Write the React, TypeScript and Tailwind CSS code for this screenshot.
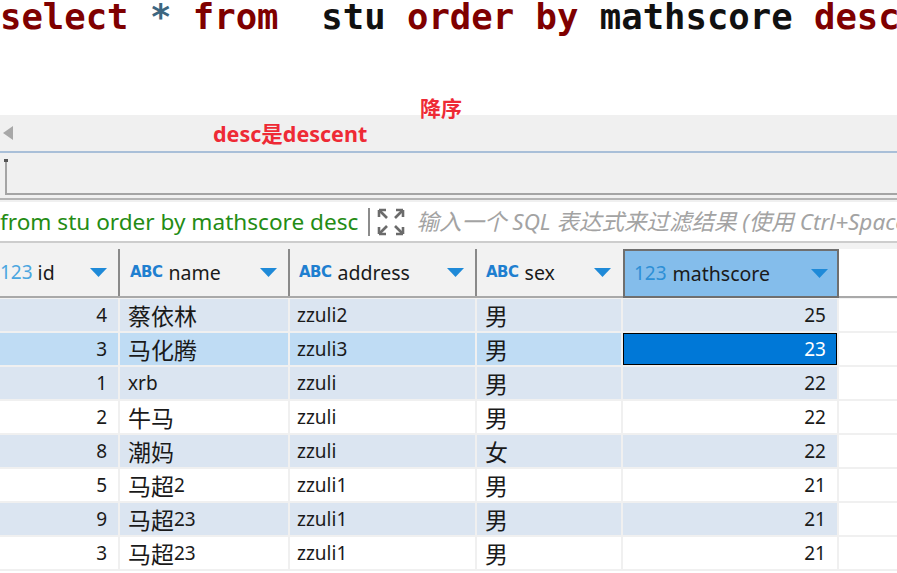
import React from "react";

const FONT = { fontFamily: '"Noto Sans", "Noto Sans CJK SC", sans-serif' };
const CJK = { fontFamily: '"Noto Sans CJK SC", sans-serif' };

function Mixed({ text }: { text: string }) {
  const parts = text.split(/([\u4e00-\u9fff]+)/).filter((p) => p.length > 0);
  return (
    <>
      {parts.map((p, i) =>
        /[\u4e00-\u9fff]/.test(p) ? (
          <span key={i} className="text-[23px] leading-none" style={CJK}>
            {p}
          </span>
        ) : (
          <span key={i}>{p}</span>
        )
      )}
    </>
  );
}

function Tri() {
  return (
    <svg width="17" height="9" viewBox="0 0 17 9">
      <polygon points="0,0 17,0 8.5,9" fill="#1f8ad8" />
    </svg>
  );
}

function Abc() {
  return (
    <span className="text-[15px] font-bold text-[#1f7fd0] tracking-[-0.5px] mr-[6px]" style={{ fontFamily: '"DejaVu Sans", sans-serif' }}>
      ABC
    </span>
  );
}

function Num() {
  return <span className="text-[19px] text-[#4aa6e0] mr-[5px]">123</span>;
}

function ExpandIcon() {
  return (
    <svg width="28" height="28" viewBox="0 0 28 28" fill="none" stroke="#6b6b6b" strokeWidth="2.6">
      <path d="M3 3 L10 10" />
      <path d="M2 2 L2 9 M2 2 L9 2" />
      <path d="M25 3 L18 10" />
      <path d="M26 2 L26 9 M26 2 L19 2" />
      <path d="M3 25 L10 18" />
      <path d="M2 26 L2 19 M2 26 L9 26" />
      <path d="M25 25 L18 18" />
      <path d="M26 26 L26 19 M26 26 L19 26" />
    </svg>
  );
}

const rows = [
  { id: 4, name: "蔡依林", addr: "zzuli2", sex: "男", score: 25 },
  { id: 3, name: "马化腾", addr: "zzuli3", sex: "男", score: 23 },
  { id: 1, name: "xrb", addr: "zzuli", sex: "男", score: 22 },
  { id: 2, name: "牛马", addr: "zzuli", sex: "男", score: 22 },
  { id: 8, name: "潮妈", addr: "zzuli", sex: "女", score: 22 },
  { id: 5, name: "马超2", addr: "zzuli1", sex: "男", score: 21 },
  { id: 9, name: "马超23", addr: "zzuli1", sex: "男", score: 21 },
  { id: 3, name: "马超23", addr: "zzuli1", sex: "男", score: 21 },
];

export default function App() {
  return (
    <div className="relative w-[897px] h-[573px] overflow-hidden bg-white text-[#1a1a1a] flex flex-col" style={FONT}>
      {/* SQL line */}
      <div className="h-[115px] shrink-0 flex flex-col">
        <div
          className="-mt-[4px] whitespace-pre text-[35.6px] leading-[42px] font-bold"
          style={{ fontFamily: '"DejaVu Sans Mono", "Liberation Mono", monospace' }}
        >
          <span className="text-[#7f0000]">select</span>
          <span> </span>
          <span className="text-[#3d6680]">*</span>
          <span> </span>
          <span className="text-[#7f0000]">from</span>
          <span className="text-[#111]">  stu </span>
          <span className="text-[#7f0000]">order</span>
          <span> </span>
          <span className="text-[#7f0000]">by</span>
          <span className="text-[#111]"> mathscore </span>
          <span className="text-[#7f0000]">desc</span>
        </div>
      </div>

      {/* toolbar */}
      <div className="h-[38px] shrink-0 bg-[#f0f0f0] border-b-2 border-[#a9bfd8] flex items-center pl-[3px]">
        <svg width="10" height="14" viewBox="0 0 10 14">
          <polygon points="10,0 10,14 0,7" fill="#a8a8a8" />
        </svg>
      </div>

      {/* tab area */}
      <div className="h-[49px] shrink-0 bg-[#f0f0f0] flex flex-col">
        <div className="h-[7px]" />
        <div className="relative h-[35px] ml-[5px] border-l-2 border-b-2 border-[#a4a4a4]">
          <div className="absolute -left-[3px] -top-[1px] w-[4px] h-[3px] bg-[#555]" />
        </div>
        <div className="h-[5px] border-b-2 border-[#b4b4b4]" />
      </div>

      {/* filter row */}
      <div className="h-[41px] shrink-0 bg-white border-b-2 border-[#cdcdcd] flex items-center whitespace-nowrap overflow-hidden">
        <span className="shrink-0 text-[22.6px] text-[#248c14]">from stu order by mathscore desc</span>
        <div className="shrink-0 ml-[10px] w-[2px] h-[28px] bg-[#8c8c8c]" />
        <div className="shrink-0 ml-[7px]">
          <ExpandIcon />
        </div>
        <span className="shrink-0 ml-[11px] italic text-[22.5px] text-[#a3a3a3]">输入一个 SQL 表达式来过滤结果 (使用 Ctrl+Space)</span>
      </div>

      {/* header */}
      <div className="h-[56px] shrink-0 bg-[#f2f2f2] flex flex-col">
        <div className="h-[6px]" />
        <div className="flex h-[49px] border-b-2 border-[#a9a9a9] whitespace-nowrap">
          <div className="w-[120px] border-r-2 border-[#8a8a8a] flex items-center pr-[11px]">
            <Num />
            <span className="text-[19.5px]">id</span>
            <div className="ml-auto">
              <Tri />
            </div>
          </div>
          <div className="w-[170px] border-r-2 border-[#8a8a8a] flex items-center pl-[10px] pr-[11px]">
            <Abc />
            <span className="text-[19.5px]">name</span>
            <div className="ml-auto">
              <Tri />
            </div>
          </div>
          <div className="w-[187px] border-r-2 border-[#8a8a8a] flex items-center pl-[9px] pr-[11px]">
            <Abc />
            <span className="text-[19.5px]">address</span>
            <div className="ml-auto">
              <Tri />
            </div>
          </div>
          <div className="w-[146px] flex items-center pl-[9px] pr-[12px]">
            <Abc />
            <span className="text-[19.5px]">sex</span>
            <div className="ml-auto">
              <Tri />
            </div>
          </div>
          <div className="w-[216px] -mb-[2px] bg-[#84bdeb] border-2 border-[#6f6f6f] flex items-center pl-[9px] pr-[9px]">
            <span className="text-[19px] text-[#2d8fd6] mr-[6px]">123</span>
            <span className="text-[19.5px]">mathscore</span>
            <div className="ml-auto">
              <Tri />
            </div>
          </div>
          <div className="flex-1 bg-white" />
        </div>
      </div>

      {/* body */}
      <div className="flex flex-col shrink-0">
        {rows.map((r, i) => {
          const selected = i === 1;
          const bg = selected ? "bg-[#bfdcf4]" : i % 2 === 0 ? "bg-[#dbe5f1]" : "bg-white";
          return (
            <div key={i} className="flex h-[34px] shrink-0 text-[19px] whitespace-nowrap">
              <div className={`w-[120px] ${bg} border-r-2 border-b-2 border-[#f0f0f0] flex items-center justify-end pr-[11px]`}>
                {r.id}
              </div>
              <div className={`w-[170px] ${bg} border-r-2 border-b-2 border-[#f0f0f0] flex items-center pl-[8px]`}>
                <Mixed text={r.name} />
              </div>
              <div className={`w-[187px] ${bg} border-r-2 border-b-2 border-[#f0f0f0] flex items-center pl-[7px]`}>
                {r.addr}
              </div>
              <div className={`w-[146px] ${bg} border-r-2 border-b-2 border-[#f0f0f0] flex items-center pl-[8px]`}>
                <Mixed text={r.sex} />
              </div>
              {selected ? (
                <div className="w-[216px] border-b-2 border-r-2 border-[#f0f0f0]">
                  <div className="h-full bg-[#0078d7] border border-black flex items-center justify-end pr-[10px] text-white">
                    {r.score}
                  </div>
                </div>
              ) : (
                <div className={`w-[216px] ${i % 2 === 0 ? "bg-[#dbe5f1]" : "bg-white"} border-r-2 border-b-2 border-[#f0f0f0] flex items-center justify-end pr-[11px]`}>
                  {r.score}
                </div>
              )}
              <div className="flex-1 bg-white border-b-2 border-[#f0f0f0]" />
            </div>
          );
        })}
      </div>

      {/* annotations */}
      <div className="absolute left-[420px] top-[94px] text-[21px] font-bold text-[#ee2a35] leading-[26px]" style={CJK}>
        降序
      </div>
      <div className="absolute left-[213px] top-[120px] text-[21.5px] font-bold text-[#ee2a35] leading-[28px] whitespace-nowrap" style={FONT}>
        desc是descent
      </div>
    </div>
  );
}
